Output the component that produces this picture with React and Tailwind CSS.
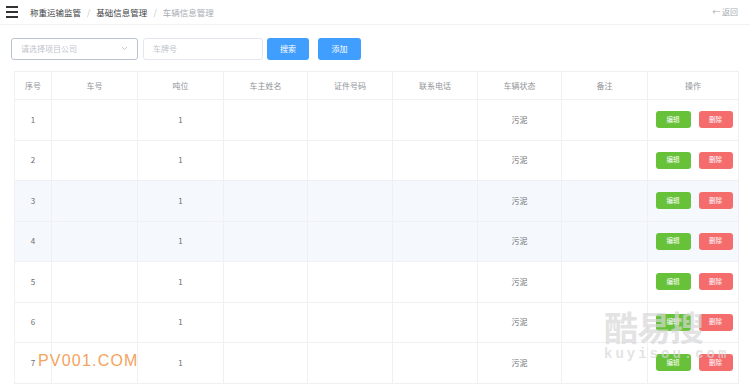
import React from 'react';

const columns = [
  { key: 'idx', title: '序号', w: 'w-[37px]' },
  { key: 'no', title: '车号', w: 'w-[86px]' },
  { key: 'ton', title: '吨位', w: 'w-[86px]' },
  { key: 'owner', title: '车主姓名', w: 'w-[84px]' },
  { key: 'card', title: '证件号码', w: 'w-[85px]' },
  { key: 'phone', title: '联系电话', w: 'w-[85px]' },
  { key: 'status', title: '车辆状态', w: 'w-[84px]' },
  { key: 'note', title: '备注', w: 'w-[86px]' },
  { key: 'op', title: '操作', w: 'w-[91px]' },
];

const rows = [1, 2, 3, 4, 5, 6, 7].map((n) => ({
  idx: n,
  no: '',
  ton: 1,
  owner: '',
  card: '',
  phone: '',
  status: '污泥',
  note: '',
  hover: n === 3 || n === 4,
}));

const App = () => {
  return (
    <div
      className="relative w-[750px] h-[386px] overflow-hidden bg-white"
      style={{ fontFamily: '"Noto Sans CJK SC", "Liberation Sans", sans-serif' }}
    >
      {/* header */}
      <div className="flex items-center justify-between h-[25px] border-b border-[#f2f2f2] pl-[6px] pr-[12px]">
        <div className="flex items-center">
          <div className="flex flex-col gap-[3px] w-[12px] mr-[12px]">
            <div className="h-[2px] bg-[#333]" />
            <div className="h-[2px] bg-[#333]" />
            <div className="h-[2px] bg-[#333]" />
          </div>
          <div className="flex items-center text-[8.5px] leading-none font-normal">
            <span className="text-[#404246]">称重运输监管</span>
            <span className="mx-[6px] text-[#c0c4cc]">/</span>
            <span className="text-[#404246]">基础信息管理</span>
            <span className="mx-[6px] text-[#c0c4cc]">/</span>
            <span className="text-[#a8abb2]">车辆信息管理</span>
          </div>
        </div>
        <div className="text-[8px] text-[#a8abb2]">← 返回</div>
      </div>

      {/* search bar */}
      <div className="flex items-center pt-[12px] pl-[11px] h-[35px]">
        <div className="flex items-center justify-between w-[127px] h-[22px] border border-[#b9c4d3] rounded-[3px] px-[9px]">
          <span className="text-[8px] text-[#c0c4cc]">请选择项目公司</span>
          <svg width="7" height="5" viewBox="0 0 7 5">
            <path d="M1 1 L3.5 3.5 L6 1" fill="none" stroke="#c0c4cc" strokeWidth="0.9" />
          </svg>
        </div>
        <div className="flex items-center w-[120px] h-[22px] border border-[#e4e7ed] rounded-[3px] px-[9px] ml-[5px]">
          <span className="text-[8px] text-[#c0c4cc]">车牌号</span>
        </div>
        <button className="w-[42px] h-[22px] ml-[4px] rounded-[3px] bg-[#409eff] text-white text-[8px]">搜索</button>
        <button className="w-[43px] h-[22px] ml-[9px] rounded-[3px] bg-[#409eff] text-white text-[8px]">添加</button>
      </div>

      {/* table */}
      <div className="pl-[14px] pt-[11px]">
        <table className="table-fixed border-collapse w-[724px] text-[8px]">
          <thead>
            <tr className="h-[28px]">
              {columns.map((c) => (
                <th
                  key={c.key}
                  className={`${c.w} border border-[#eef0f4] font-normal text-[#909399] text-center`}
                >
                  {c.title}
                </th>
              ))}
            </tr>
          </thead>
          <tbody>
            {rows.map((r) => (
              <tr key={r.idx} className={`h-[40.5px] ${r.hover ? 'bg-[#f5f9fd]' : 'bg-white'}`}>
                {columns.map((c) => (
                  <td key={c.key} className="border border-[#eef0f4] text-center text-[#6b6d71]">
                    {c.key === 'op' ? (
                      <div className="flex justify-center gap-[8px] pl-[2px]">
                        <button className="w-[35px] h-[17px] rounded-[3px] bg-[#67c23a] text-white text-[6.5px]">编辑</button>
                        <button className="w-[34px] h-[17px] rounded-[3px] bg-[#f56c6c] text-white text-[6.5px]">删除</button>
                      </div>
                    ) : (
                      r[c.key]
                    )}
                  </td>
                ))}
              </tr>
            ))}
          </tbody>
        </table>
      </div>

      {/* watermarks */}
      <div
        className="absolute left-[38px] top-[349px] text-[16px] tracking-[1.2px] text-[#f3a35e]"
        style={{ fontFamily: '"Liberation Sans", sans-serif' }}
      >
        PV001.COM
      </div>
      <div className="absolute left-[604px] top-[310px] flex flex-col items-start leading-none text-[rgba(215,215,215,0.7)]">
        <span className="text-[34px] font-bold tracking-[-1px]">酷易搜</span>
        <span
          className="text-[14px] font-bold tracking-[3px] mt-[3px]"
          style={{ fontFamily: '"Liberation Mono", monospace' }}
        >
          kuyisou.com
        </span>
      </div>
    </div>
  );
};

export default App;
